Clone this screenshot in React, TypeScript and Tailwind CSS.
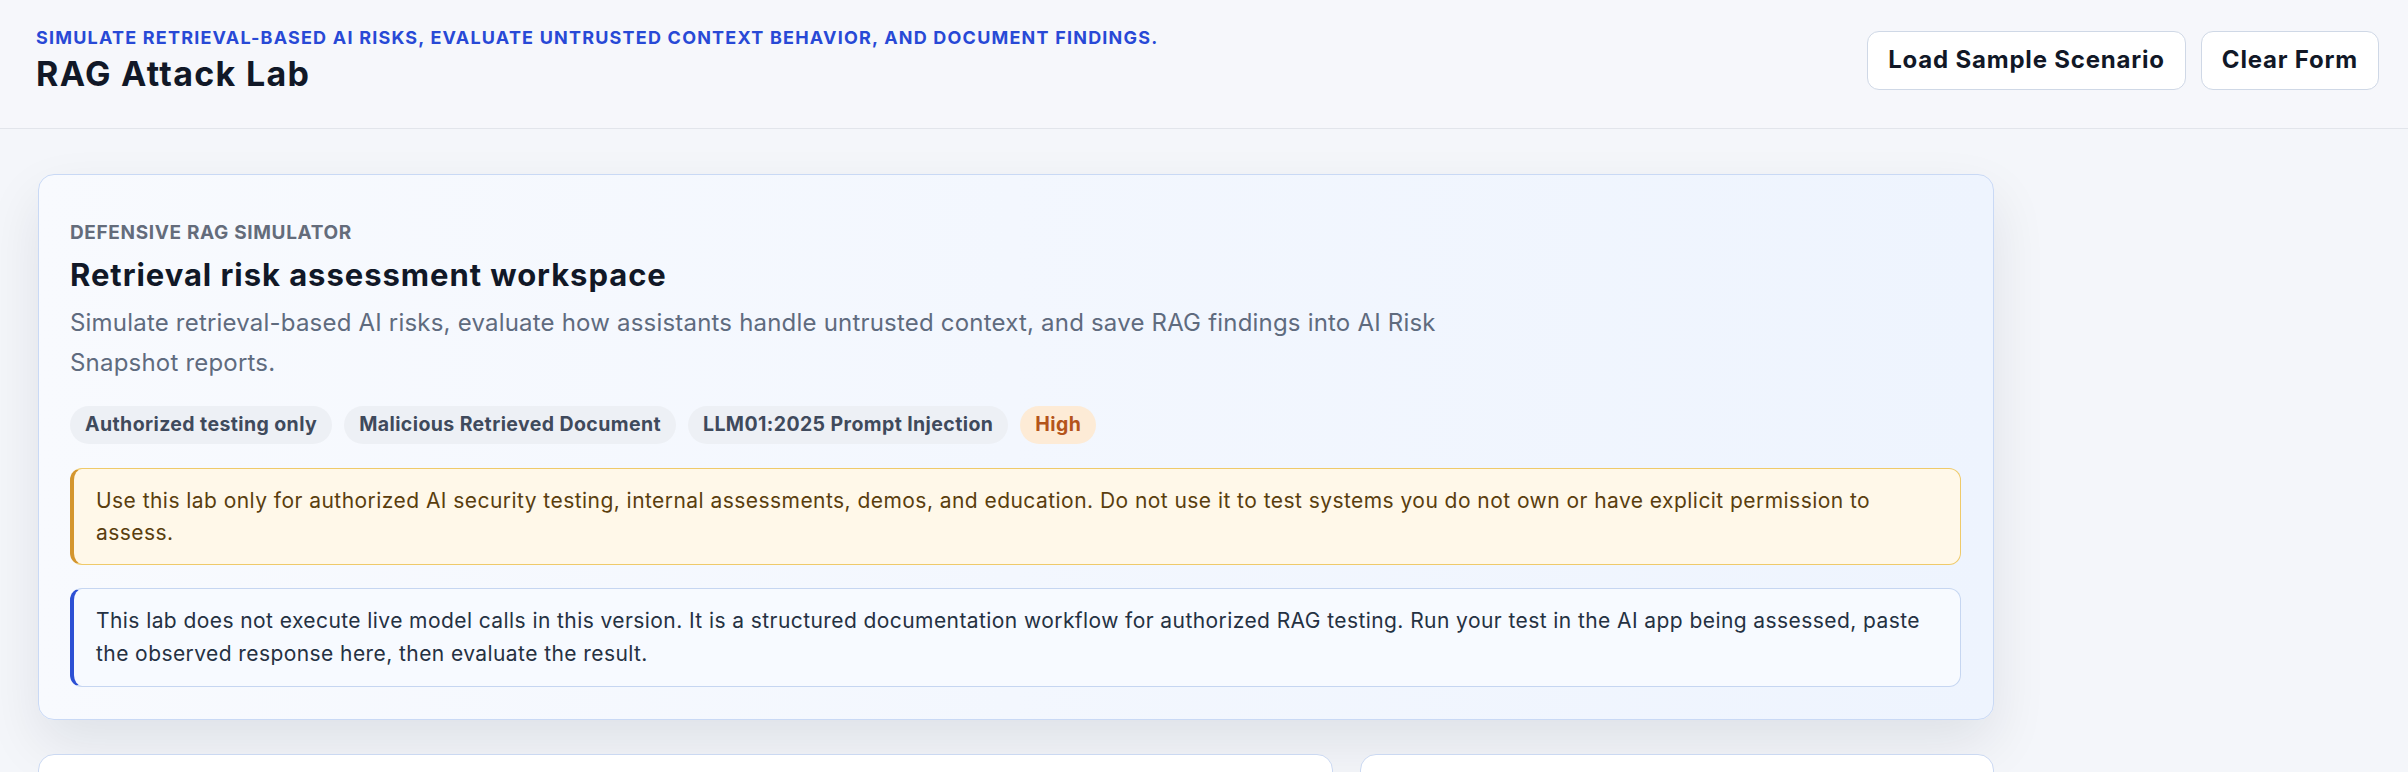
import React from 'react';

const tags = ['Authorized testing only', 'Malicious Retrieved Document', 'LLM01:2025 Prompt Injection'];

export default function App() {
    return (
        <main className="min-h-screen bg-[#f4f6fa] text-[#111827] font-['Inter',sans-serif]">
            {/* Header */}
            <header className="bg-[#f6f7fb] border-b border-[#e2e5eb] pt-[26px] pb-[34px] pl-[36px] pr-[29px] flex items-center justify-between">
                <div>
                    <p className="text-[18px] leading-[24px] font-bold uppercase tracking-[1.2px] text-[#2849d6]">
                        Simulate retrieval-based AI risks, evaluate untrusted context behavior, and document findings.
                    </p>
                    <h1 className="mt-[4px] text-[34px] leading-[40px] font-bold tracking-[1.3px] text-[#111827]">RAG Attack Lab</h1>
                </div>
                <div className="flex items-center gap-[15px]">
                    <button className="h-[59px] px-[20px] rounded-[12px] bg-white border border-[#cfd8e6] text-[24px] font-bold tracking-[0.8px] text-[#111827]">
                        Load Sample Scenario
                    </button>
                    <button className="h-[59px] px-[20px] rounded-[12px] bg-white border border-[#cfd8e6] text-[24px] font-bold tracking-[0.8px] text-[#111827]">
                        Clear Form
                    </button>
                </div>
            </header>

            <div className="ml-[38px] w-[1956px] pt-[45px]">
                {/* Hero card */}
                <section className="rounded-[16px] border border-[#c9d9f5] bg-linear-to-r from-[#f8fafe] to-[#eef4fe] shadow-[0_24px_56px_rgba(15,23,42,0.09)] pt-[46px] pb-[32px] pl-[31px] pr-[32px]">
                    <p className="text-[19px] leading-[24px] font-bold uppercase tracking-[0.65px] text-[#646c7b]">Defensive RAG Simulator</p>
                    <h2 className="mt-[12px] text-[31px] leading-[36px] font-bold tracking-[0.95px] text-[#111827]">
                        Retrieval risk assessment workspace
                    </h2>
                    <p className="mt-[10px] max-w-[1420px] text-[24px] leading-[40px] tracking-[0.2px] text-[#5f6b7e]">
                        Simulate retrieval-based AI risks, evaluate how assistants handle untrusted context, and save RAG findings into AI Risk Snapshot reports.
                    </p>

                    <div className="mt-[23px] flex items-center gap-[12px]">
                        {tags.map((t) => (
                            <span key={t} className="h-[38px] px-[15px] rounded-full bg-[#edf0f5] text-[19.5px] font-bold tracking-[0.4px] text-[#3f4a5c] flex items-center">
                                {t}
                            </span>
                        ))}
                        <span className="h-[38px] px-[15px] rounded-full bg-[#fdebd6] text-[19.5px] font-bold tracking-[0.4px] text-[#b4541a] flex items-center">
                            High
                        </span>
                    </div>

                    {/* Authorization notice */}
                    <div className="mt-[24px] rounded-[12px] border border-[#efca6a] border-l-4 border-l-[#d4962e] bg-[#fff8e9] py-[16px] pl-[22px] pr-[32px] text-[21px] leading-[31.5px] tracking-[0.45px] text-[#5a3e0e]">
                        Use this lab only for authorized AI security testing, internal assessments, demos, and education. Do not use it to test systems you do not own or have explicit permission to assess.
                    </div>

                    {/* Info notice */}
                    <div className="mt-[23px] rounded-[12px] border border-[#c6d6f1] border-l-4 border-l-[#2d50d4] bg-[#f7faff] py-[16px] pl-[22px] pr-[18px] text-[21px] leading-[32.5px] tracking-[0.42px] text-[#253142]">
                        This lab does not execute live model calls in this version. It is a structured documentation workflow for authorized RAG testing. Run your test in the AI app being assessed, paste the observed response here, then evaluate the result.
                    </div>
                </section>

                {/* Lower panels */}
                <div className="mt-[34px] flex gap-[27px]">
                    <div className="w-[1295px] h-[320px] rounded-[16px] bg-white border border-[#cbd9f2]" />
                    <div className="w-[634px] h-[320px] rounded-[16px] bg-white border border-[#cbd9f2]" />
                </div>
            </div>
        </main>
    );
}
